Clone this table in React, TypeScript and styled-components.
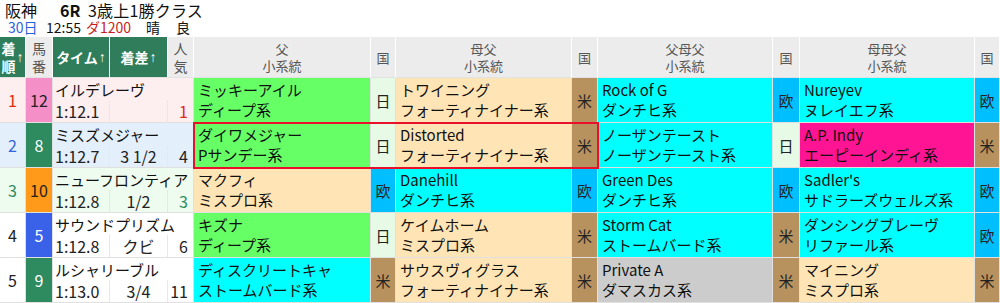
import styled, { createGlobalStyle } from "styled-components";

const GlobalStyle = createGlobalStyle`
  html, body {
    margin: 0;
    padding: 0;
    background: #ffffff;
  }
  body {
    font-family: "Noto Sans CJK JP", "Noto Sans", sans-serif;
    color: #222;
  }
`;

type Line = "sunday" | "mrp" | "northern" | "ap" | "damascus";
type Country = "日" | "米" | "欧";

interface Sire {
  name: string;
  line: string;
  kind: Line;
  country: Country;
}

interface Horse {
  rank: number;
  num: number;
  numColor: string;
  numText: string;
  name: string;
  time: string;
  margin: string;
  pop: number;
  tint: string;
  rankColor: string;
  popColor: string;
  highlight?: boolean;
  sires: Sire[];
}

const LINE_BG: Record<Line, string> = {
  sunday: "#66ff66",
  mrp: "#ffe4b5",
  northern: "#00ffff",
  ap: "#ff1493",
  damascus: "#cccccc",
};

const COUNTRY_BG: Record<Country, string> = {
  日: "#e6fae6",
  米: "#b8925e",
  欧: "#00bfff",
};

const horses: Horse[] = [
  {
    rank: 1, num: 12, numColor: "#f48fc8", numText: "#222", name: "イルデレーヴ",
    time: "1:12.1", margin: "", pop: 1, tint: "#fdeef0", rankColor: "#e02a10", popColor: "#e02a10",
    sires: [
      { name: "ミッキーアイル", line: "ディープ系", kind: "sunday", country: "日" },
      { name: "トワイニング", line: "フォーティナイナー系", kind: "mrp", country: "米" },
      { name: "Rock of G", line: "ダンチヒ系", kind: "northern", country: "欧" },
      { name: "Nureyev", line: "ヌレイエフ系", kind: "northern", country: "欧" },
    ],
  },
  {
    rank: 2, num: 8, numColor: "#2e8b5f", numText: "#fff", name: "ミスズメジャー",
    time: "1:12.7", margin: "3 1/2", pop: 4, tint: "#e4effc", rankColor: "#3366dd", popColor: "#222",
    highlight: true,
    sires: [
      { name: "ダイワメジャー", line: "Pサンデー系", kind: "sunday", country: "日" },
      { name: "Distorted", line: "フォーティナイナー系", kind: "mrp", country: "米" },
      { name: "ノーザンテースト", line: "ノーザンテースト系", kind: "northern", country: "日" },
      { name: "A.P. Indy", line: "エーピーインディ系", kind: "ap", country: "米" },
    ],
  },
  {
    rank: 3, num: 10, numColor: "#ff9a1a", numText: "#222", name: "ニューフロンティア",
    time: "1:12.8", margin: "1/2", pop: 3, tint: "#eefbef", rankColor: "#2e8b5f", popColor: "#2e8b5f",
    sires: [
      { name: "マクフィ", line: "ミスプロ系", kind: "mrp", country: "欧" },
      { name: "Danehill", line: "ダンチヒ系", kind: "northern", country: "欧" },
      { name: "Green Des", line: "ダンチヒ系", kind: "northern", country: "欧" },
      { name: "Sadler's", line: "サドラーズウェルズ系", kind: "northern", country: "欧" },
    ],
  },
  {
    rank: 4, num: 5, numColor: "#3a62e8", numText: "#fff", name: "サウンドプリズム",
    time: "1:12.8", margin: "クビ", pop: 6, tint: "#ffffff", rankColor: "#222", popColor: "#222",
    sires: [
      { name: "キズナ", line: "ディープ系", kind: "sunday", country: "日" },
      { name: "ケイムホーム", line: "ミスプロ系", kind: "mrp", country: "米" },
      { name: "Storm Cat", line: "ストームバード系", kind: "northern", country: "米" },
      { name: "ダンシングブレーヴ", line: "リファール系", kind: "northern", country: "欧" },
    ],
  },
  {
    rank: 5, num: 9, numColor: "#2e8b5f", numText: "#fff", name: "ルシャリーブル",
    time: "1:13.0", margin: "3/4", pop: 11, tint: "#ffffff", rankColor: "#222", popColor: "#222",
    sires: [
      { name: "ディスクリートキャ", line: "ストームバード系", kind: "northern", country: "米" },
      { name: "サウスヴィグラス", line: "フォーティナイナー系", kind: "mrp", country: "米" },
      { name: "Private A", line: "ダマスカス系", kind: "damascus", country: "米" },
      { name: "マイニング", line: "ミスプロ系", kind: "mrp", country: "米" },
    ],
  },
];

const COLS = "26px 27px 57px 58px 26px 177px 25px 176px 26px 175px 27px 175px 25px";

export default function App() {
  return (
    <>
      <GlobalStyle />
      <Page>
        <RaceInfo>
          <TitleLine>
            <Venue>阪神</Venue>
            <RaceNo>6R</RaceNo>
            <RaceName>3歳上1勝クラス</RaceName>
          </TitleLine>
          <MetaLine>
            <Meta color="#2b5fd9" w={38}>30日</Meta>
            <Meta w={40}>12:55</Meta>
            <Meta color="#c81e1e" w={60}>ダ1200</Meta>
            <Meta w={30}>晴</Meta>
            <Meta>良</Meta>
          </MetaLine>
        </RaceInfo>

        <Table>
          <HeadCell dark>着<br />順<Arrow>↑</Arrow></HeadCell>
          <HeadCell>馬<br />番</HeadCell>
          <HeadCell dark>タイム<Arrow>↑</Arrow></HeadCell>
          <HeadCell dark>着差<Arrow>↑</Arrow></HeadCell>
          <HeadCell>人<br />気</HeadCell>
          <HeadCell small>父<br />小系統</HeadCell>
          <HeadCell small>国</HeadCell>
          <HeadCell small>母父<br />小系統</HeadCell>
          <HeadCell small>国</HeadCell>
          <HeadCell small>父母父<br />小系統</HeadCell>
          <HeadCell small>国</HeadCell>
          <HeadCell small>母母父<br />小系統</HeadCell>
          <HeadCell small>国</HeadCell>

          {horses.map((h) => (
            <Row key={h.num}>
              <RankCell bg={h.tint} color={h.rankColor}>{h.rank}</RankCell>
              <NumCell bg={h.numColor} color={h.numText}>{h.num}</NumCell>
              <HorseBlock bg={h.tint}>
                <HorseName>{h.name}</HorseName>
                <Time>{h.time}</Time>
                <Margin>{h.margin}</Margin>
                <Pop color={h.popColor}>{h.pop}</Pop>
              </HorseBlock>
              <SireGroup highlight={h.highlight} span={[6, 10]}>
                <SireCells sire={h.sires[0]} />
                <SireCells sire={h.sires[1]} />
              </SireGroup>
              <SireGroup span={[10, 14]}>
                <SireCells sire={h.sires[2]} />
                <SireCells sire={h.sires[3]} />
              </SireGroup>
            </Row>
          ))}
        </Table>
      </Page>
    </>
  );
}

function SireCells({ sire }: { sire: Sire }) {
  return (
    <>
      <SireCell bg={LINE_BG[sire.kind]}>
        <span>{sire.name}</span>
        <span>{sire.line}</span>
      </SireCell>
      <CountryCell bg={COUNTRY_BG[sire.country]}>{sire.country}</CountryCell>
    </>
  );
}

const Page = styled.div`
  width: 1000px;
  height: 303px;
  overflow: hidden;
  display: flex;
  flex-direction: column;
`;

const RaceInfo = styled.div`
  height: 37px;
  display: flex;
  flex-direction: column;
  padding: 1px 0 0 5px;
  box-sizing: border-box;
`;

const TitleLine = styled.div`
  display: flex;
  align-items: baseline;
  height: 19px;
  line-height: 19px;
  font-size: 16px;
  color: #111;
`;

const Venue = styled.span`
  width: 55px;
`;

const RaceNo = styled.span`
  font-weight: bold;
  width: 28px;
`;

const RaceName = styled.span`
  letter-spacing: 0.2px;
`;

const MetaLine = styled.div`
  display: flex;
  height: 15px;
  line-height: 15px;
  font-size: 14px;
  padding-left: 3px;
`;

const Meta = styled.span<{ color?: string; w?: number }>`
  color: ${({ color }) => color || "#111"};
  width: ${({ w }) => (w ? `${w}px` : "auto")};
`;

const Table = styled.div`
  display: grid;
  grid-template-columns: ${COLS};
  grid-template-rows: 41px repeat(5, 45px);
`;

const HeadCell = styled.div<{ dark?: boolean; small?: boolean }>`
  display: flex;
  align-items: center;
  justify-content: center;
  text-align: center;
  box-sizing: border-box;
  border-right: 1px solid #ffffff;
  border-bottom: 1px solid #e2e2e2;
  background: ${({ dark }) => (dark ? "#2f7d5b" : "#ececec")};
  color: ${({ dark }) => (dark ? "#ffffff" : "#555")};
  font-weight: ${({ dark }) => (dark ? "bold" : "normal")};
  font-size: ${({ small }) => (small ? "13px" : "14px")};
  line-height: ${({ small }) => (small ? "17px" : "18px")};
  white-space: nowrap;
`;

const Arrow = styled.span`
  font-family: "Liberation Sans", sans-serif;
  font-weight: bold;
  margin-left: 1px;
`;

const Row = styled.div`
  display: contents;
`;

const BaseCell = styled.div<{ bg: string }>`
  box-sizing: border-box;
  background: ${({ bg }) => bg};
  border-right: 1px solid #e0e0e0;
  border-bottom: 1px solid #e0e0e0;
`;

const RankCell = styled(BaseCell)<{ color: string }>`
  display: flex;
  align-items: center;
  justify-content: center;
  color: ${({ color }) => color};
  font-size: 16px;
`;

const NumCell = styled(BaseCell)<{ color: string }>`
  display: flex;
  align-items: center;
  justify-content: center;
  color: ${({ color }) => color};
  font-size: 16px;
`;

const HorseBlock = styled(BaseCell)`
  grid-column: 3 / 6;
  display: grid;
  grid-template-columns: 57px 58px 26px;
  grid-template-rows: 22px 22px;
  font-size: 15px;
  line-height: 20px;
`;

const HorseName = styled.div`
  grid-column: 1 / 4;
  padding: 2px 0 0 2px;
  white-space: nowrap;
  color: #111;
`;

const Time = styled.div`
  padding: 1px 0 0 2px;
  border-right: 1px solid #e8e8e8;
  color: #222;
  font-size: 16px;
`;

const Margin = styled.div`
  padding-top: 1px;
  text-align: center;
  border-right: 1px solid #e8e8e8;
  color: #222;
  font-size: 16px;
`;

const Pop = styled.div<{ color: string }>`
  padding: 1px 6px 0 0;
  text-align: right;
  color: ${({ color }) => color};
  font-size: 16px;
`;

const SireGroup = styled.div<{ highlight?: boolean; span: [number, number] }>`
  grid-column: ${({ span }) => `${span[0]} / ${span[1]}`};
  display: grid;
  grid-template-columns: ${({ span }) => (span[0] === 6 ? "177px 25px 176px 26px" : "175px 27px 175px 25px")};
  outline: ${({ highlight }) => (highlight ? "2px solid #e8102a" : "none")};
  outline-offset: -1px;
  position: relative;
  z-index: ${({ highlight }) => (highlight ? 1 : 0)};
`;

const SireCell = styled(BaseCell)`
  display: flex;
  flex-direction: column;
  justify-content: center;
  padding-left: 4px;
  font-size: 15px;
  line-height: 20px;
  color: #111;
  white-space: nowrap;
  overflow: hidden;
`;

const CountryCell = styled(BaseCell)`
  display: flex;
  align-items: center;
  justify-content: center;
  font-size: 15px;
  color: #222;
`;
